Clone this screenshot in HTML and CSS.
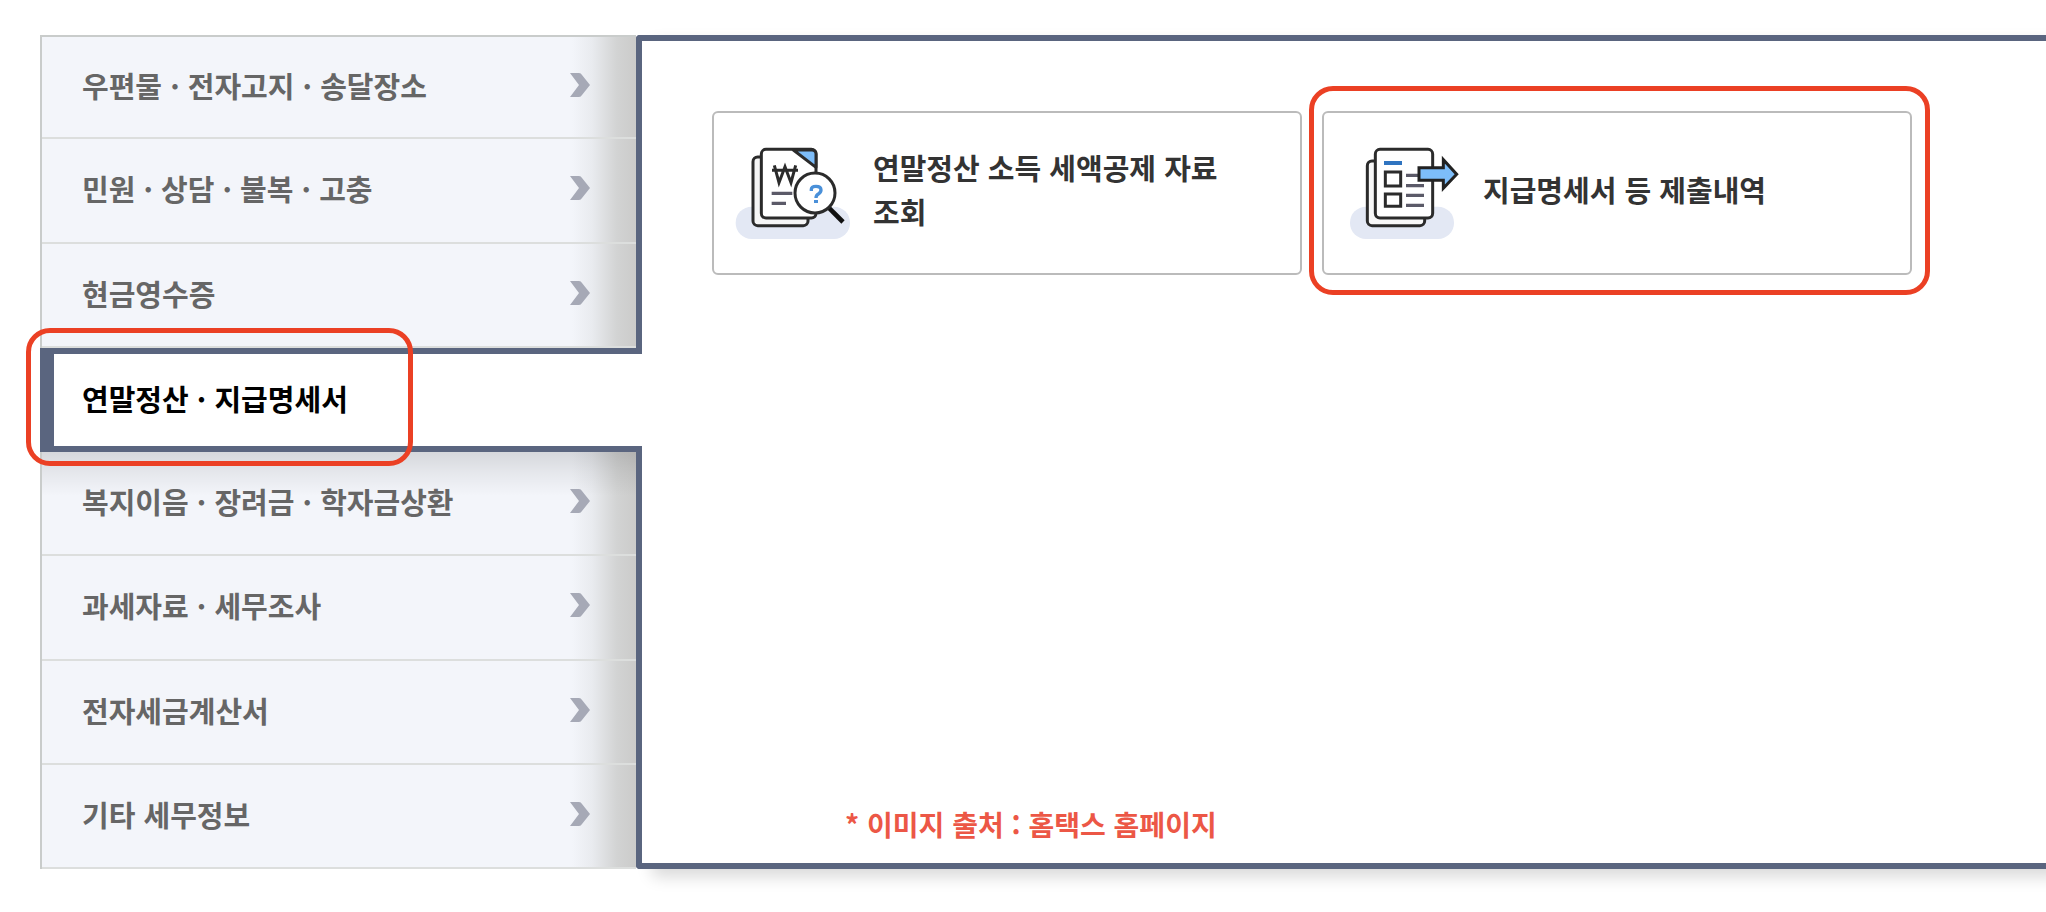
FILE: index.html
```
<!DOCTYPE html>
<html lang="ko">
<head>
  <meta charset="UTF-8">
  <title>홈택스 - 연말정산 · 지급명세서</title>
  <meta name="viewport" content="width=device-width, initial-scale=1.0">
  <link rel="stylesheet" href="styles.css">
</head>
<body>
  <!-- 화살표 아이콘 -->
  <svg class="sprite" aria-hidden="true">
    <symbol id="chevron" viewBox="0 0 20 24">
      <path d="M0 0h9q2 0 3 2l8 10-8 10q-1 2-3 2H0l9-12z" fill="#a6a9b6"/>
    </symbol>
  </svg>

  <div class="menu-page">
    <!-- 왼쪽 메뉴 -->
    <nav class="side">
      <ul>
        <li><a href="#">우편물 · 전자고지 · 송달장소<svg class="arrow"><use href="#chevron"/></svg></a></li>
        <li><a href="#">민원 · 상담 · 불복 · 고충<svg class="arrow"><use href="#chevron"/></svg></a></li>
        <li><a href="#">현금영수증<svg class="arrow"><use href="#chevron"/></svg></a></li>
        <li class="active"><a href="#">연말정산 · 지급명세서</a><span class="mark"></span></li>
        <li><a href="#">복지이음 · 장려금 · 학자금상환<svg class="arrow"><use href="#chevron"/></svg></a></li>
        <li><a href="#">과세자료 · 세무조사<svg class="arrow"><use href="#chevron"/></svg></a></li>
        <li><a href="#">전자세금계산서<svg class="arrow"><use href="#chevron"/></svg></a></li>
        <li><a href="#">기타 세무정보<svg class="arrow"><use href="#chevron"/></svg></a></li>
      </ul>
    </nav>

    <!-- 선택한 메뉴의 내용 -->
    <main class="panel">
      <div class="cards">
        <a class="card" href="#">
          <svg class="card-icon" viewBox="42 72 354 291" aria-hidden="true">
            <rect x="47" y="260" width="343" height="97" rx="48" fill="#e3e8f4"/>
            <g stroke="#2b2b2b" stroke-width="9" stroke-linejoin="round">
              <rect x="99" y="111" width="165" height="206" rx="14" fill="#f5f5f5"/>
              <rect x="124" y="88" width="164" height="206" rx="14" fill="#fff"/>
              <path d="M220 90h56q12 0 12 12v40z" fill="#7dbdf9"/>
            </g>
            <path d="M163 136l14 52 18-48 18 48 14-52M156 151h78" fill="none" stroke="#2b2b2b" stroke-width="9"/>
            <path d="M155 220h62M155 250h43" stroke="#5b5a68" stroke-width="10"/>
            <path d="M326 263l43 43" stroke="#111" stroke-width="14"/>
            <circle cx="285" cy="219" r="60" fill="#fff" stroke="#2b2b2b" stroke-width="9"/>
            <path d="M274 213v-5q0-9 14-9 15 0 15 11 0 7-8 12-7 4-7 12" fill="none" stroke="#4a90d9" stroke-width="10"/>
            <rect x="282" y="240" width="12" height="9" fill="#4a90d9"/>
          </svg>
          <span class="card-text">연말정산 소득 세액공제 자료 조회</span>
        </a>
        <a class="card" href="#">
          <svg class="card-icon" viewBox="42 72 354 291" aria-hidden="true">
            <rect x="60" y="260" width="312" height="97" rx="48" fill="#e3e8f4"/>
            <g stroke="#2b2b2b" stroke-width="9">
              <rect x="112" y="123" width="172" height="194" rx="14" fill="#f8f8f8"/>
              <rect x="136" y="88" width="172" height="206" rx="14" fill="#fff"/>
              <path d="M166 156h46v42h-46zM166 222h46v37h-46z" fill="#fff"/>
            </g>
            <path d="M162 129h54" stroke="#2f74c0" stroke-width="12"/>
            <path d="M228 166h40M228 197h54M228 226h54M228 256h54" stroke="#5b5a68" stroke-width="10"/>
            <path d="M267 143h73v-24l40 44-40 42v-24h-73z" fill="#7dbdf9" stroke="#222" stroke-width="9"/>
          </svg>
          <span class="card-text">지급명세서 등 제출내역</span>
          <span class="mark"></span>
        </a>
      </div>
      <p class="source">* 이미지 출처 : 홈택스 홈페이지</p>
    </main>
  </div>
</body>
</html>
```
FILE: styles.css
```
* { box-sizing: border-box; }
body { margin: 0; background: #fff; color: #333; font-family: "Noto Sans CJK KR", sans-serif; font-weight: 700; overflow-x: hidden; }
a { color: inherit; text-decoration: none; }
ul { list-style: none; margin: 0; padding: 0; }
.sprite { display: none; }

.menu-page { display: flex; min-height: 834px; margin: 35px 0 43px 40px; }

/* 왼쪽 메뉴 */
.side { flex: 0 0 596px; display: flex; position: relative; z-index: 1; }
.side ul { flex: 1; display: grid; grid-template-rows: repeat(8, 1fr); border-left: 2px solid #c9cccb; background: linear-gradient(to right, #f3f5fa 530px, #e9ebef 550px, #d2d3d3 575px, #cbcbca 594px); }
.side li { border-bottom: 2px solid #dcdedd; }
.side li:first-child { border-top: 2px solid #c9cccb; }
.side a { display: flex; align-items: center; justify-content: space-between; height: 100%; padding: 0 46px 4px 40px; font-size: 29px; line-height: 44px; color: #666; }
.arrow { width: 20px; height: 24px; }
.side .active { position: relative; margin: 0 -6px 0 -2px; border: solid #5a657f; border-width: 6px 0 6px 14px; background: #fff; }
.side .active a { padding-left: 28px; color: #000; }
.side .active + li { background: linear-gradient(rgba(0, 0, 0, 0.12), rgba(0, 0, 0, 0.06) 20px, transparent 44px); }

/* 내용 영역 */
.panel { flex: 1; display: flex; flex-direction: column; justify-content: space-between; padding: 70px 64px 19px 70px; border: 6px solid #5a657f; border-right: 0; border-radius: 4px 0 0 4px; background: #fff; box-shadow: 16px 8px 16px rgba(0, 0, 0, 0.15); }
.cards { display: grid; grid-template-columns: repeat(2, minmax(0, 590px)); gap: 20px; }
.card { position: relative; display: flex; align-items: center; gap: 21px; height: 164px; padding: 0 60px 2px 20px; border: 2px solid #bbb; border-radius: 6px; font-size: 29px; line-height: 44px; word-break: keep-all; }
.card-icon { flex: none; width: 118px; height: 97px; }
.card-text { padding-bottom: 7px; }
.source { margin: 0 0 0 133px; font-size: 28px; line-height: 40px; color: #ec5746; }

/* 강조 테두리 */
.mark { position: absolute; border: 5px solid #eb4024; border-radius: 24px; pointer-events: none; }
.active .mark { top: -26px; bottom: -20px; left: -28px; width: 387px; }
.card .mark { top: -27px; right: -20px; bottom: -22px; left: -15px; }
```
